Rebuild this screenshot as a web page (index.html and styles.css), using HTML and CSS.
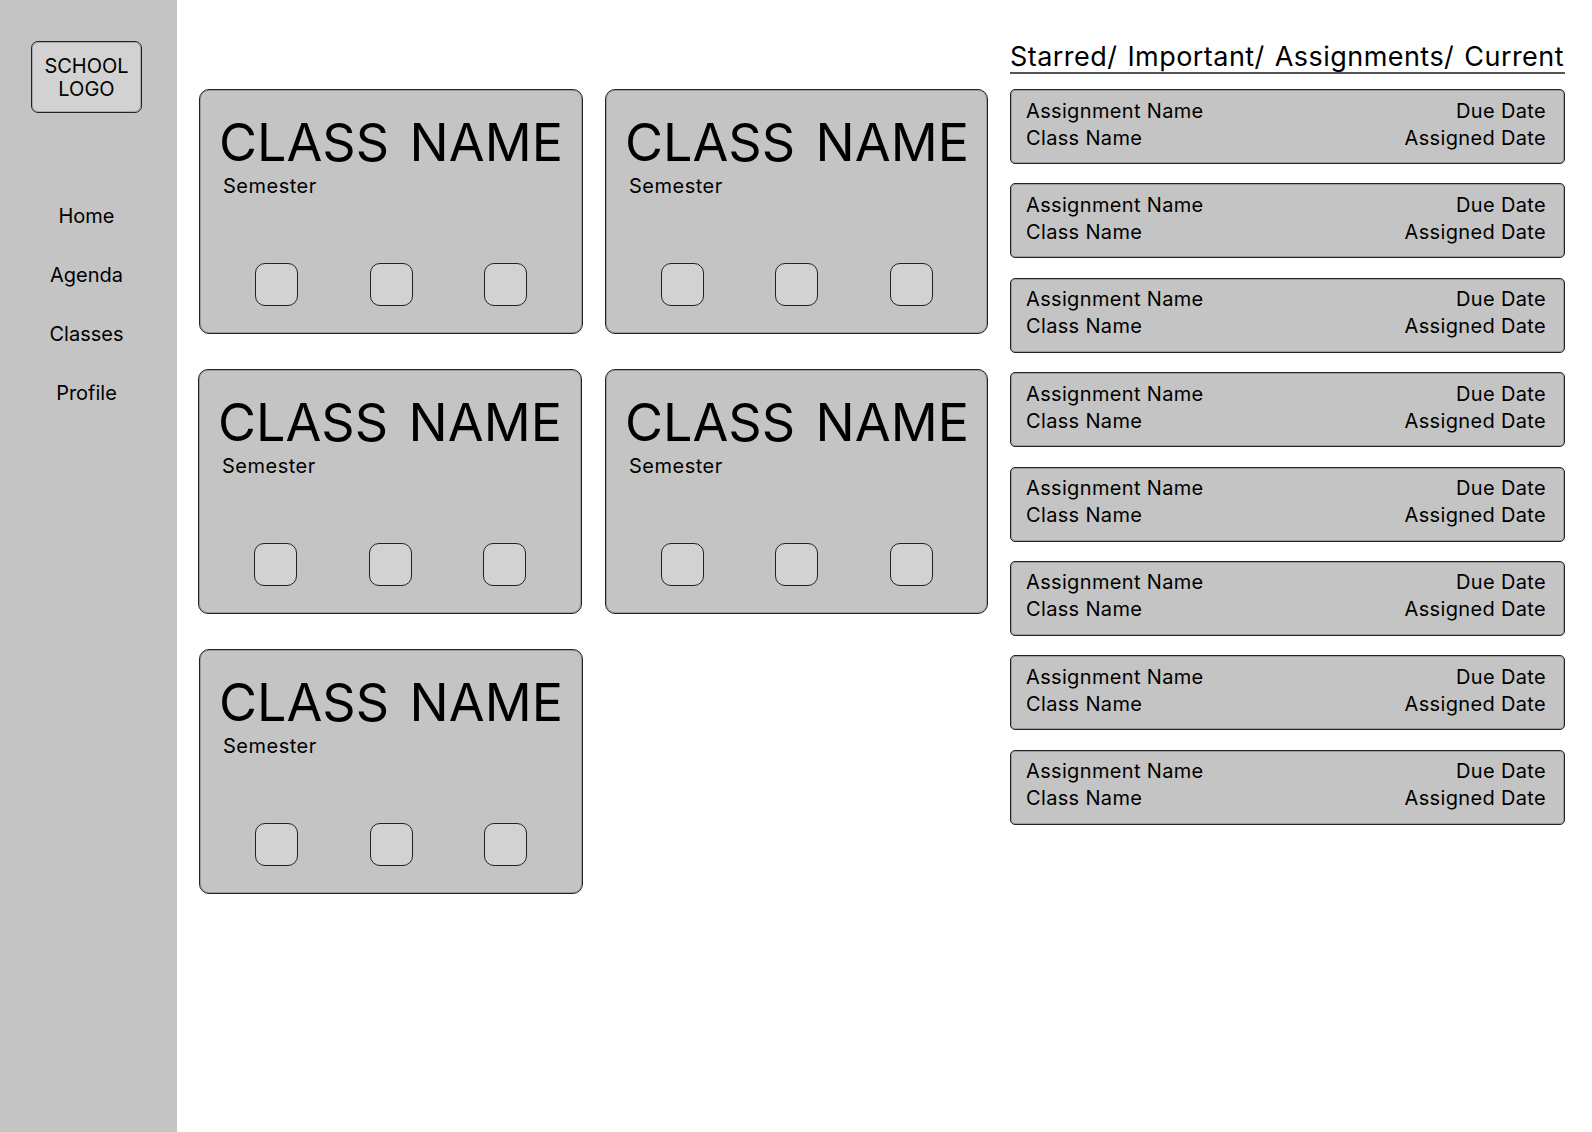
FILE: index.html
```html
<!DOCTYPE html>
<html lang="en">
<head>
    <meta charset="UTF-8">
    <meta name="viewport" content="width=device-width, initial-scale=1.0">
    <title>School Dashboard</title>
    <link rel="stylesheet" href="styles.css">
</head>
<body>
    <aside class="sidebar">
        <div class="logo">SCHOOL<br>LOGO</div>
        <nav class="nav">
            <a href="#">Home</a>
            <a href="#">Agenda</a>
            <a href="#">Classes</a>
            <a href="#">Profile</a>
        </nav>
    </aside>

    <main class="classes">
        <section class="card">
            <h2>CLASS NAME</h2>
            <p>Semester</p>
            <div class="card-buttons"><span></span><span></span><span></span></div>
        </section>
        <section class="card">
            <h2>CLASS NAME</h2>
            <p>Semester</p>
            <div class="card-buttons"><span></span><span></span><span></span></div>
        </section>
        <section class="card card-shifted">
            <h2>CLASS NAME</h2>
            <p>Semester</p>
            <div class="card-buttons"><span></span><span></span><span></span></div>
        </section>
        <section class="card">
            <h2>CLASS NAME</h2>
            <p>Semester</p>
            <div class="card-buttons"><span></span><span></span><span></span></div>
        </section>
        <section class="card">
            <h2>CLASS NAME</h2>
            <p>Semester</p>
            <div class="card-buttons"><span></span><span></span><span></span></div>
        </section>
    </main>

    <section class="assignments">
        <h1>Starred/ Important/ Assignments/ Current</h1>
        <div class="item"><span>Assignment Name</span><span>Due Date</span><span>Class Name</span><span>Assigned Date</span></div>
        <div class="item"><span>Assignment Name</span><span>Due Date</span><span>Class Name</span><span>Assigned Date</span></div>
        <div class="item"><span>Assignment Name</span><span>Due Date</span><span>Class Name</span><span>Assigned Date</span></div>
        <div class="item"><span>Assignment Name</span><span>Due Date</span><span>Class Name</span><span>Assigned Date</span></div>
        <div class="item"><span>Assignment Name</span><span>Due Date</span><span>Class Name</span><span>Assigned Date</span></div>
        <div class="item"><span>Assignment Name</span><span>Due Date</span><span>Class Name</span><span>Assigned Date</span></div>
        <div class="item"><span>Assignment Name</span><span>Due Date</span><span>Class Name</span><span>Assigned Date</span></div>
        <div class="item"><span>Assignment Name</span><span>Due Date</span><span>Class Name</span><span>Assigned Date</span></div>
    </section>
</body>
</html>
```

FILE: styles.css
```css
* {
    box-sizing: border-box;
}
body {
    margin: 0;
    height: 1132px;
    overflow: hidden;
    display: flex;
    align-items: flex-start;
    background-color: #fff;
    color: #000;
    font-family: Inter, "Liberation Sans", sans-serif;
}
.sidebar {
    width: 177px;
    height: 1132px;
    flex-shrink: 0;
    padding: 41px 4px 0 0;
    background-color: #c4c4c4;
}
.logo {
    width: 111px;
    height: 72px;
    margin: 0 auto;
    padding-top: 2px;
    display: flex;
    align-items: center;
    justify-content: center;
    text-align: center;
    font-size: 20px;
    line-height: 23px;
    background-color: #d2d2d2;
    border: 1px solid #222;
    border-radius: 7px;
    box-shadow: inset 0 0 0 1px rgba(0, 0, 0, 0.2);
}
.nav {
    margin-top: 91px;
    display: flex;
    flex-direction: column;
    align-items: center;
    gap: 35px;
}
.nav a {
    color: #000;
    font-size: 20px;
    line-height: 24px;
    text-decoration: none;
}
.classes {
    width: 789px;
    margin: 89px 0 0 22px;
    display: grid;
    grid-template-columns: 384px 383px;
    column-gap: 22px;
    row-gap: 35.2px;
}
.card {
    height: 245px;
    padding-top: 23px;
    background-color: #c4c4c4;
    border: 1px solid #222;
    border-radius: 10px;
    box-shadow: inset 0 0 0 1px rgba(0, 0, 0, 0.2);
}
.card-shifted {
    margin: 0 1px 0 -1px;
}
.card h2 {
    margin: 0 0 0 19px;
    font-size: 52px;
    font-weight: 400;
    line-height: 60px;
    word-spacing: 6px;
    white-space: nowrap;
}
.card p {
    margin: 1px 0 0 23px;
    font-size: 20px;
    line-height: 24px;
    letter-spacing: 0.5px;
}
.card-buttons {
    margin-top: 65px;
    display: flex;
    justify-content: center;
    gap: 71.5px;
}
.card-buttons span {
    width: 43px;
    height: 43px;
    background-color: #d2d2d2;
    border: 1px solid #222;
    border-radius: 10px;
}
.assignments {
    width: 555px;
    margin: 41px 0 0 22px;
}
.assignments h1 {
    margin: 0 0 15px;
    height: 33px;
    font-size: 27px;
    font-weight: 400;
    line-height: 32px;
    letter-spacing: 0.45px;
    word-spacing: 2px;
    white-space: nowrap;
    border-bottom: 2px solid #555;
}
.item {
    height: 75px;
    margin-bottom: 19.4px;
    padding: 7px 18px 0 15px;
    display: grid;
    grid-template-columns: 1fr auto;
    grid-auto-rows: 27px;
    align-items: center;
    font-size: 20px;
    letter-spacing: 0.34px;
    background-color: #c4c4c4;
    border: 1px solid #222;
    border-radius: 5px;
    box-shadow: inset 0 0 0 1px rgba(0, 0, 0, 0.2);
}
.item span:nth-child(even) {
    text-align: right;
}
```
